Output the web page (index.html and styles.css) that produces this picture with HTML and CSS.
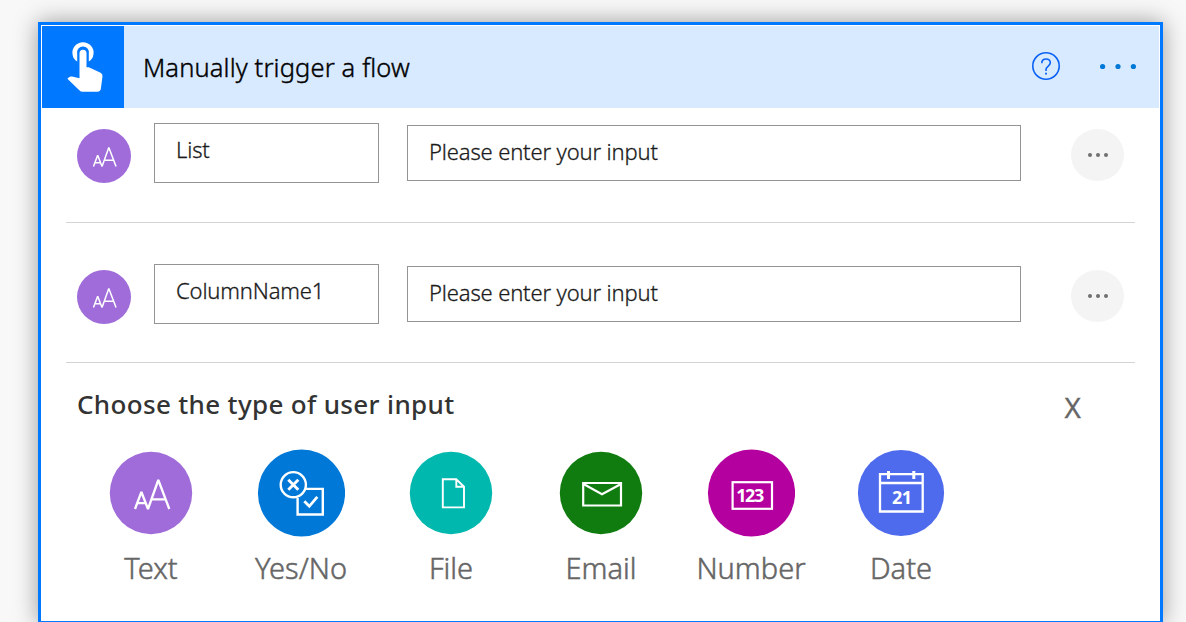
FILE: index.html
```html
<!DOCTYPE html>
<html lang="en">
<head>
<meta charset="utf-8">
<title>Manually trigger a flow</title>
<link rel="stylesheet" href="styles.css">
</head>
<body>
<svg class="sprite" width="0" height="0">
  <symbol id="letters" viewBox="0 0 82 82">
    <path d="M25 57 31.4 40 38 57M27.2 51.2H36M38 57 48.3 28 59.3 57M41.6 47.3H55.6" fill="none" stroke="#fff" stroke-width="2.3" stroke-linejoin="bevel"/>
  </symbol>
</svg>
<main class="card">
  <header class="header">
    <div class="trigger">
      <svg width="82" height="82" viewBox="0 0 82 82">
        <path d="M35.2 35.6A10.6 10.6 0 1 1 46.8 35.6V27.4A5.9 5.9 0 1 0 35.2 27.4Z" fill="#fff"/>
        <path d="M37.5 27.2a3.5 3.5 0 0 1 7 0V41.2H46.8L58.6 46.8Q60.8 48 60.5 50.2L58.9 62.6Q58.4 65.8 55.4 65.8H40.8Q38.7 65.8 37.3 64.3L25.4 52.8 27 51.3Q28.3 50.2 30 50.6L37.5 52.2Z" fill="#fff"/>
      </svg>
    </div>
    <h1 class="title">Manually trigger a flow</h1>
    <svg class="help" width="30" height="30" viewBox="0 0 30 30" fill="none" stroke="#0a62f5">
      <circle cx="15" cy="15" r="13.2" stroke-width="1.6"/>
      <path d="M10.8 12.2C10.7 6.7 19.5 6.6 19.3 11.9C19.2 15 15 15.2 15 18.8V20" stroke-width="1.6"/>
      <path d="M15 21.7v1.9" stroke-width="1.9"/>
    </svg>
    <svg class="more" width="40" height="8" viewBox="0 0 40 8" fill="#0078d7">
      <circle cx="4.6" cy="4.5" r="2.6"/><circle cx="20" cy="4.5" r="2.6"/><circle cx="35.4" cy="4.5" r="2.6"/>
    </svg>
  </header>
  <section class="row">
    <div class="avatar"><svg width="54" height="54"><use href="#letters"/></svg></div>
    <div class="field name">List</div>
    <div class="field value">Please enter your input</div>
    <div class="options"><svg width="22" height="6" viewBox="0 0 22 6" fill="#707070"><circle cx="3" cy="3" r="2"/><circle cx="11" cy="3" r="2"/><circle cx="19" cy="3" r="2"/></svg></div>
  </section>
  <section class="row second">
    <div class="avatar"><svg width="54" height="54"><use href="#letters"/></svg></div>
    <div class="field name">ColumnName1</div>
    <div class="field value">Please enter your input</div>
    <div class="options"><svg width="22" height="6" viewBox="0 0 22 6" fill="#707070"><circle cx="3" cy="3" r="2"/><circle cx="11" cy="3" r="2"/><circle cx="19" cy="3" r="2"/></svg></div>
  </section>
  <div class="chooser">
    <h2>Choose the type of user input</h2>
    <span class="close">X</span>
  </div>
  <div class="types">
    <div class="type">
      <div class="disc"><svg width="88" height="88" viewBox="-3 -3 88 88"><circle cx="41" cy="41" r="41.2" fill="#a06cd9"/><use href="#letters" width="82" height="82"/></svg></div>
      <span class="label">Text</span>
    </div>
    <div class="type">
      <div class="disc"><svg width="88" height="88" viewBox="257 449 88 88" fill="none" stroke="#fff"><circle cx="301.5" cy="493" r="43.6" fill="#0078d7" stroke="none"/><path d="M305 488.9H322.8V514.5H297.6V498" stroke-width="2.4"/><circle cx="293.3" cy="484.7" r="12.6" stroke-width="2.4"/><path d="M288.3 479.7l10 10M298.3 479.7l-10 10" stroke-width="2.9"/><path d="M304.3 501.3l5 5 8-9.4" stroke-width="2.8"/></svg></div>
      <span class="label">Yes/No</span>
    </div>
    <div class="type">
      <div class="disc"><svg width="88" height="88" viewBox="407 449 88 88" fill="none" stroke="#fff"><circle cx="451" cy="493" r="41.2" fill="#00b8ad" stroke="none"/><path d="M442.8 479.2H456.3L464 486.7V507.4H442.8ZM456.3 479V486.7H464" stroke-width="1.9"/></svg></div>
      <span class="label">File</span>
    </div>
    <div class="type">
      <div class="disc"><svg width="88" height="88" viewBox="557 449 88 88" fill="none" stroke="#fff"><circle cx="601" cy="493" r="41.2" fill="#107c10" stroke="none"/><path d="M583.2 483H621V505.5H583.2ZM583.5 484 602 494.2 621 484" stroke-width="2.2"/></svg></div>
      <span class="label">Email</span>
    </div>
    <div class="type">
      <div class="disc"><svg width="88" height="88" viewBox="707 449 88 88"><circle cx="751.5" cy="493" r="43.6" fill="#b4009e"/><rect x="732.6" y="482.2" width="39.4" height="26.6" fill="none" stroke="#fff" stroke-width="2.2"/><text x="736.2" y="501.8" textLength="28" class="digits">123</text></svg></div>
      <span class="label">Number</span>
    </div>
    <div class="type">
      <div class="disc"><svg width="88" height="88" viewBox="857 449 88 88"><circle cx="901" cy="493" r="43.1" fill="#4f6bed"/><path d="M880 474.2H922.7V511.5H880ZM880 483H922.7" fill="none" stroke="#fff" stroke-width="2.3"/><path d="M888.5 471v8M913.8 471v8" stroke="#fff" stroke-width="3"/><text x="892" y="504.2" textLength="20" class="digits">21</text></svg></div>
      <span class="label">Date</span>
    </div>
  </div>
</main>
</body>
</html>
```
FILE: styles.css
```css
* { box-sizing: border-box; }
body {
  margin: 0;
  padding: 22px 23px 0 38px;
  height: 622px;
  overflow: hidden;
  background: #f8f8f8;
  font-family: "Noto Sans", "Open Sans", sans-serif;
}
.sprite { position: absolute; }
.card {
  width: 1125px;
  height: 602px;
  padding: 1px;
  border: 3px solid #0078ff;
  background: #fff;
  box-shadow: 0 0 22px rgba(0, 0, 0, .38);
}
svg { display: block; flex: none; }
.header {
  display: flex;
  align-items: center;
  height: 82px;
  padding-right: 21px;
  background: #d8eaff;
}
.trigger { width: 82px; height: 82px; background: #0078ff; }
.title {
  flex: 1;
  margin: 0;
  padding-left: 19px;
  font-size: 25.5px;
  line-height: 34px;
  font-weight: 300;
  letter-spacing: .13px;
  -webkit-text-stroke: .4px;
  color: #000;
  white-space: nowrap;
}
.help { margin: -2px 37px 0 0; }
.more { margin-top: -2px; }
.row {
  display: flex;
  align-items: center;
  margin: 0 24px;
  padding: 15px 11px 39px;
  height: 115px;
  border-bottom: 1px solid #d4d4d4;
}
.second { height: 140px; padding: 41px 11px 38px; }
.avatar {
  width: 54px;
  height: 54px;
  margin: 6px 23px 0 0;
  border-radius: 50%;
  background: #a06cd9;
}
.field {
  border: 1px solid #949494;
  padding-left: 21px;
  font-size: 22px;
  line-height: 30px;
  font-weight: 300;
  letter-spacing: -.15px;
  -webkit-text-stroke: .3px;
  color: #1b1b1b;
  white-space: nowrap;
}
.name { width: 225px; height: 60px; padding-top: 10px; margin-right: 28px; }
.value { width: 614px; height: 56px; padding-top: 10px; }
.options {
  display: flex;
  align-items: center;
  justify-content: center;
  width: 53px;
  height: 52px;
  margin: 4px 0 0 50px;
  border-radius: 50%;
  background: #f4f4f4;
}
.chooser {
  display: flex;
  justify-content: space-between;
  height: 86px;
  padding: 23px 78px 0 35px;
}
.chooser h2 {
  margin: 0;
  font-size: 26px;
  line-height: 36px;
  font-weight: 500;
  letter-spacing: .34px;
  color: #333;
  white-space: nowrap;
}
.close { padding-top: 3px; font-size: 28px; line-height: 36px; color: #666; -webkit-text-stroke: .3px; }
.types { display: flex; padding-left: 34px; }
.type { width: 150px; display: flex; flex-direction: column; align-items: center; }
.disc { width: 88px; height: 88px; }
.label {
  margin-top: 11px;
  font-size: 29px;
  line-height: 40px;
  font-weight: 300;
  -webkit-text-stroke: .5px;
  color: #666;
  white-space: nowrap;
}
.digits { font: 700 18px "Noto Sans", "Open Sans", sans-serif; fill: #fff; }
```
